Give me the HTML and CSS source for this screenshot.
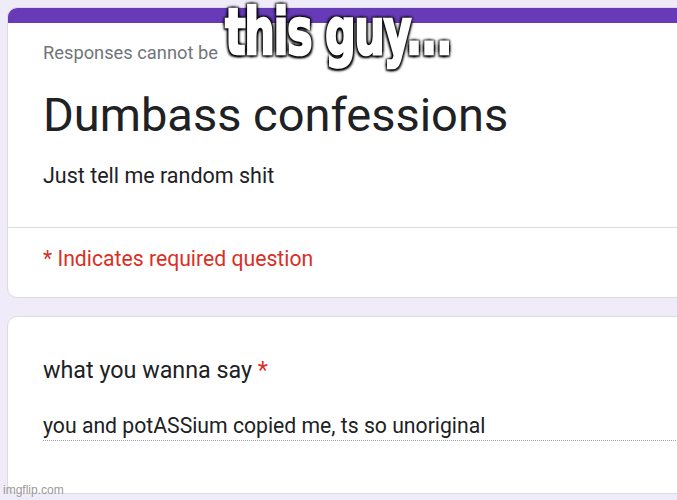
FILE: index.html
```html
<!DOCTYPE html>
<html lang="en">
<head>
    <meta charset="UTF-8">
    <meta name="viewport" content="width=device-width, initial-scale=1.0">
    <title>Dumbass confessions</title>
    <link rel="stylesheet" href="styles.css">
</head>
<body>

    <!-- Form -->
    <main class="form">
        <section class="card card-head">
            <div class="accent"></div>
            <div class="head-body">
                <p class="notice">Responses cannot be</p>
                <h1>Dumbass confessions</h1>
                <p class="desc">Just tell me random shit</p>
            </div>
            <div class="required">* Indicates required question</div>
        </section>

        <section class="card question">
            <h2>what you wanna say <span class="star">*</span></h2>
            <div class="answer">you and potASSium copied me, ts so unoriginal</div>
        </section>
    </main>

    <!-- Meme caption -->
    <div class="caption"><span>this guy...</span></div>
    <span class="watermark">imgflip.com</span>

</body>
</html>
```

FILE: styles.css
```css
* {
    margin: 0;
    padding: 0;
    box-sizing: border-box;
}
body {
    background: #f0ebf8;
    font-family: Roboto, "Liberation Sans", Arial, sans-serif;
    width: 677px;
    height: 500px;
    overflow: hidden;
    position: relative;
}

/* Cards */
.form {
    padding-top: 7px;
    padding-left: 7px;
    display: flex;
    flex-direction: column;
    gap: 18px;
}
.card {
    background: #fff;
    border: 1px solid #dadce0;
    border-radius: 10px;
    width: 700px;
}
.card-head {
    overflow: hidden;
}
.accent {
    height: 15px;
    background: #673ab7;
}
.head-body {
    padding: 20px 35px 38px;
    border-bottom: 1px solid #dadce0;
}
.notice {
    font-size: 18.3px;
    line-height: 20px;
    color: #70757a;
}
h1 {
    font-weight: 400;
    font-size: 47px;
    line-height: 52px;
    color: #202124;
    margin-top: 26px;
}
.desc {
    font-size: 21.5px;
    line-height: 26px;
    color: #202124;
    margin-top: 22px;
}
.required {
    padding: 19px 35px 26px;
    font-size: 21.2px;
    line-height: 24px;
    color: #d93025;
}

/* Question */
.question {
    padding: 39px 0 52px 35px;
}
h2 {
    font-weight: 400;
    font-size: 23.3px;
    line-height: 28px;
    color: #202124;
}
.star { color: #d93025; }
.answer {
    margin-top: 30px;
    font-size: 21.2px;
    line-height: 24px;
    color: #202124;
    padding-bottom: 2px;
    border-bottom: 1px dotted #9aa0a6;
}

/* Caption */
.caption {
    position: absolute;
    top: 3px;
    left: 0;
    width: 677px;
    text-align: center;
}
.caption span {
    display: inline-block;
    transform: scale(0.98, 1.32);
    transform-origin: center top;
    font-family: Impact, "DejaVu Sans Condensed", "Liberation Sans Narrow", sans-serif;
    font-weight: bold;
    font-size: 48px;
    line-height: 44px;
    padding: 0 6px 10px;
    color: #fff;
    letter-spacing: -1px;
    -webkit-text-stroke: 2px #fff;
    text-shadow: 2px 2px 2px #000, -2px -2px 2px #000, 2px -2px 2px #000, -2px 2px 2px #000, 0 0 4px #000;
}
.watermark {
    position: absolute;
    left: 3px;
    bottom: 3px;
    font-family: "Liberation Sans Narrow", "Liberation Sans", sans-serif;
    font-size: 12px;
    color: #9a9a9a;
}
```
